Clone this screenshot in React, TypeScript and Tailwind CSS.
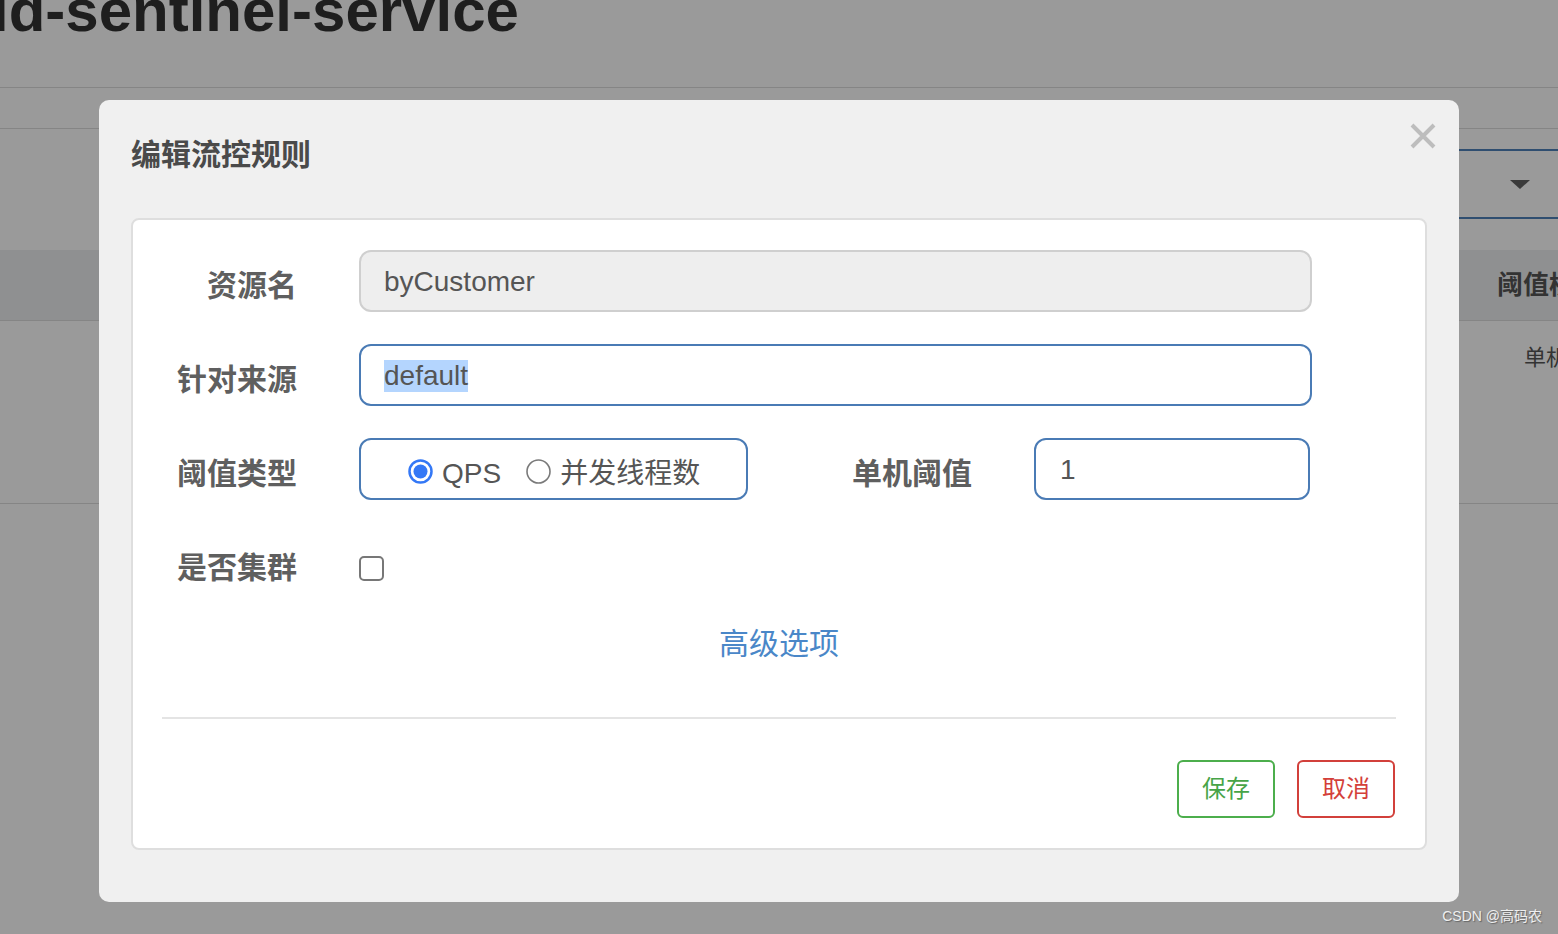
import React from "react";

function Radio({ checked }: { checked: boolean }) {
  return (
    <svg width="25" height="25" viewBox="0 0 25 25" className="shrink-0">
      {checked ? (
        <>
          <circle cx="12.5" cy="12.5" r="11" fill="none" stroke="#3478f6" strokeWidth="2.5" />
          <circle cx="12.5" cy="12.5" r="7" fill="#3478f6" />
        </>
      ) : (
        <circle cx="12.5" cy="12.5" r="11.5" fill="#fff" stroke="#7a7a7a" strokeWidth="1.6" />
      )}
    </svg>
  );
}

function Label({ children, low = true }: { children: React.ReactNode; low?: boolean }) {
  return (
    <div
      className={
        "w-[197px] shrink-0 pr-[62px] text-right text-[30px] font-bold leading-[34px] text-[#5f5f5f] " +
        (low ? "pt-[10px]" : "")
      }
    >
      {children}
    </div>
  );
}

export default function App() {
  return (
    <div className="relative h-[934px] w-full overflow-hidden bg-[#9a9a9a] font-['Liberation_Sans','Noto_Sans_CJK_SC',sans-serif]">
      {/* page behind the overlay */}
      <div className="flex h-[88px] items-start border-b border-[#858585]">
        <div className="ml-[-8px] mt-[-19px] whitespace-nowrap text-[60px] font-bold leading-[60px] text-[#1e1e1e]">
          ld-sentinel-service
        </div>
      </div>
      <div className="h-[41px] border-b border-[#858585]" />
      <div className="flex h-[121px] items-start pl-[1200px] pt-[20px]">
        <div className="flex h-[70px] flex-1 items-center justify-end border-y-2 border-[#2f4e70] pr-[28px]">
          <div className="h-0 w-0 border-x-[10px] border-t-[9px] border-x-transparent border-t-[#3a3a3a]" />
        </div>
      </div>
      <div className="flex h-[71px] items-center border-b border-[#858585] bg-[#8f9091] pl-[1497px] whitespace-nowrap text-[26px] font-bold text-[#333]">
        阈值模式
      </div>
      <div className="h-[183px] border-b border-[#858585] pl-[1524px] pt-[20px] whitespace-nowrap text-[22px] text-[#333]">
        单机阈值
      </div>

      {/* modal */}
      <div className="absolute left-[99px] top-[100px] w-[1360px] rounded-[10px] bg-[#f0f0f0] px-[32px] pb-[52px]">
        <button className="absolute right-[23px] top-[23px] h-[26px] w-[26px]">
          <svg width="26" height="26" viewBox="0 0 26 26">
            <path d="M2 2 L24 24 M24 2 L2 24" stroke="#bdbdbd" strokeWidth="4" />
          </svg>
        </button>
        <div className="h-[118px] pt-[39px] text-[30px] font-bold leading-[32px] text-[#4a4a4a]">
          编辑流控规则
        </div>

        <div className="rounded-[8px] border-2 border-[#dedede] bg-white px-[29px] pb-[30px] pt-[30px]">
          <div className="flex h-[62px] items-center">
            <Label>资源名</Label>
            <div className="flex h-[62px] w-[953px] items-center rounded-[12px] border-2 border-[#cfcfcf] bg-[#eeeeee] px-[23px] pt-[2px] text-[28px] text-[#555]">
              byCustomer
            </div>
          </div>

          <div className="mt-[32px] flex h-[62px] items-center">
            <Label>针对来源</Label>
            <div className="flex h-[62px] w-[953px] items-center rounded-[12px] border-2 border-[#4a7bb5] bg-white px-[23px] pt-[2px] text-[28px] text-[#555]">
              <span className="bg-[#b4d5fe] leading-[32px]">default</span>
            </div>
          </div>

          <div className="mt-[32px] flex h-[62px] items-center">
            <Label>阈值类型</Label>
            <div className="flex h-[62px] w-[389px] items-center rounded-[12px] border-2 border-[#4a7bb5] bg-white pl-[47px] pt-[10px] text-[28px] text-[#555]">
              <span className="mt-[-6px]">
                <Radio checked />
              </span>
              <span className="ml-[9px]">QPS</span>
              <span className="ml-[25px] mt-[-6px]">
                <Radio checked={false} />
              </span>
              <span className="ml-[9px]">并发线程数</span>
            </div>
            <div className="ml-[104px] pt-[10px] text-[30px] font-bold leading-[34px] text-[#5f5f5f]">单机阈值</div>
            <div className="ml-[62px] flex h-[62px] w-[276px] items-center rounded-[12px] border-2 border-[#4a7bb5] bg-white px-[24px] pt-[2px] text-[28px] text-[#555]">
              1
            </div>
          </div>

          <div className="mt-[37px] flex h-[62px] items-center">
            <Label low={false}>是否集群</Label>
            <div className="h-[25px] w-[25px] rounded-[5px] border-2 border-[#777] bg-white" />
          </div>

          <div className="mt-[30px] text-center text-[30px] leading-[30px] text-[#4a87c8]">高级选项</div>

          <div className="mt-[58px] border-t-2 border-[#e4e4e4]" />

          <div className="mt-[41px] flex justify-end gap-[22px] pr-[1px]">
            <button className="flex h-[58px] w-[98px] items-center justify-center rounded-[6px] border-2 border-[#4cae4c] bg-white text-[24px] text-[#47a447]">
              保存
            </button>
            <button className="flex h-[58px] w-[98px] items-center justify-center rounded-[6px] border-2 border-[#d2403b] bg-white text-[24px] text-[#d43f3a]">
              取消
            </button>
          </div>
        </div>
      </div>

      <div className="absolute bottom-[7px] right-[16px] text-[14px] text-[#efefef] [text-shadow:1px_1px_1px_rgba(0,0,0,0.35)]">
        CSDN @高码农
      </div>
    </div>
  );
}
